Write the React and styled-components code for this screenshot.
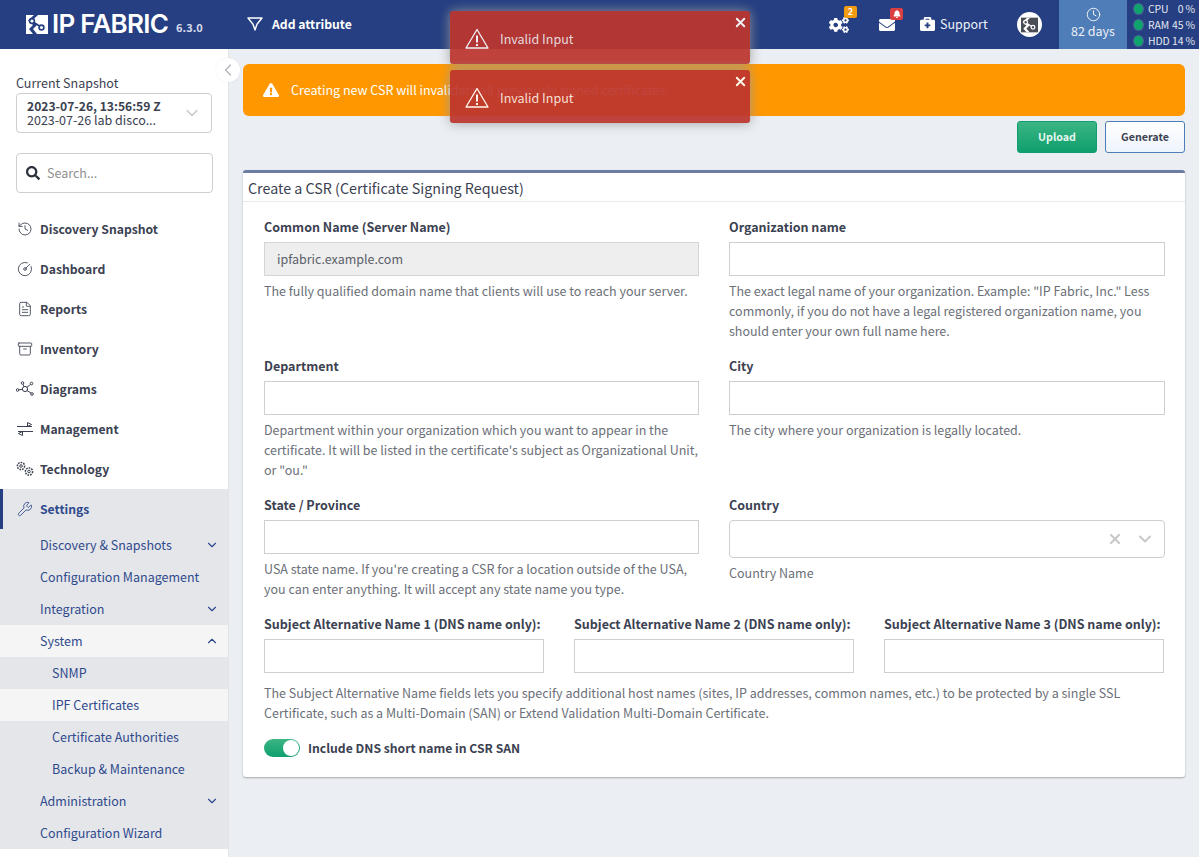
import styled, { createGlobalStyle } from "styled-components";
import {
  Archive,
  ChevronDown,
  ChevronLeft,
  ChevronUp,
  CircleGauge,
  Clock,
  FileText,
  History,
  Wrench,
  X,
} from "lucide-react";
import {
  FaBell,
  FaBriefcaseMedical,
  FaCogs,
  FaEnvelope,
  FaExclamationTriangle,
  FaSearch,
} from "react-icons/fa";

const GlobalStyle = createGlobalStyle`
  html, body {
    margin: 0;
    height: 100%;
    overflow: hidden;
  }
  body {
    font-family: "Noto Sans CJK SC", "Noto Sans", sans-serif;
    font-size: 12.5px;
    line-height: 20px;
    color: #3b4151;
    background: #ebeef3;
  }
  * { box-sizing: border-box; }
`;

const LogoMark = ({ width = 22, height = 19, bg = "#fff", fg = "#253f82" }) => (
  <svg width={width} height={height} viewBox="0 0 22 19">
    <rect width="22" height="19" fill={bg} />
    <path d="M8 0h4L6 5.5 11 10l-4 4 4 5H7l-4-5 4-4-5-4.5z" fill={fg} />
    <circle cx="6" cy="6" r="2.4" fill={bg} stroke={fg} strokeWidth="1.6" />
    <circle cx="15.5" cy="12.5" r="2.4" fill={bg} stroke={fg} strokeWidth="1.6" />
    <path d="M8 7.5l5.5 3.5" stroke={fg} strokeWidth="1.5" />
  </svg>
);

const FunnelIcon = () => (
  <svg width="16" height="16" viewBox="0 0 16 16" fill="none" stroke="#fff" strokeWidth="1.4" strokeLinejoin="round">
    <path d="M1 2h14L10 8.2 8 14 6 8.2z" />
  </svg>
);

const DiagramIcon = () => (
  <svg width="18" height="16" viewBox="0 0 18 16" fill="none" stroke="#3b4151" strokeWidth="1">
    <circle cx="9" cy="8" r="2.6" />
    <circle cx="6.5" cy="2" r="1.3" />
    <circle cx="15.5" cy="2.5" r="1.3" />
    <circle cx="16" cy="13" r="1.3" />
    <circle cx="1.5" cy="9" r="1.3" />
    <path d="M7 3.2l1 2.5M14.5 3.5l-3.7 2.8M15 12l-4.2-2.6M2.8 8.8l3.6-.5" />
  </svg>
);

const TransferIcon = () => (
  <svg width="16" height="16" viewBox="0 0 16 16" fill="none" stroke="#3b4151" strokeWidth="1">
    <path d="M0 5.5h15M10.5 1.5v4l4-2zM16 10.5H1M5.5 14.5v-4l-4 2z" />
  </svg>
);

const GearsIcon = () => (
  <svg width="18" height="16" viewBox="0 0 18 16" fill="none" stroke="#3b4151">
    <circle cx="5" cy="5" r="3.6" strokeWidth="1.5" strokeDasharray="1.7 1" />
    <circle cx="5" cy="5" r="1.3" strokeWidth="1" />
    <circle cx="13" cy="10.5" r="3.6" strokeWidth="1.5" strokeDasharray="1.7 1" />
    <circle cx="13" cy="10.5" r="1.3" strokeWidth="1" />
  </svg>
);

const AlertTriangle = () => (
  <svg width="24" height="21" viewBox="0 0 24 21" fill="none" stroke="#fff" strokeWidth="1.3" strokeLinejoin="round">
    <path d="M12 1.5L23 20H1z" />
    <path d="M12 7.5v7M12 16v2" strokeWidth="2" />
  </svg>
);

const mainNav = [
  { label: "Discovery Snapshot", icon: <History size={16} strokeWidth={1.3} /> },
  { label: "Dashboard", icon: <CircleGauge size={16} strokeWidth={1.3} /> },
  { label: "Reports", icon: <FileText size={16} strokeWidth={1.3} /> },
  { label: "Inventory", icon: <Archive size={16} strokeWidth={1.3} /> },
  { label: "Diagrams", icon: <DiagramIcon /> },
  { label: "Management", icon: <TransferIcon /> },
  { label: "Technology", icon: <GearsIcon /> },
];

const subNav = [
  { label: "Discovery & Snapshots", arrow: "down" },
  { label: "Configuration Management" },
  { label: "Integration", arrow: "down" },
  { label: "System", arrow: "up", light: true },
  { label: "SNMP", nested: true },
  { label: "IPF Certificates", nested: true, light: true },
  { label: "Certificate Authorities", nested: true },
  { label: "Backup & Maintenance", nested: true },
  { label: "Administration", arrow: "down" },
  { label: "Configuration Wizard" },
];

const stats = [
  { name: "CPU", value: "0" },
  { name: "RAM", value: "45" },
  { name: "HDD", value: "14" },
];

export default function App() {
  return (
    <Page>
      <GlobalStyle />
      <Header>
        <Logo>
          <LogoMark />
          <LogoText>IP FABRIC</LogoText>
          <Version>6.3.0</Version>
        </Logo>
        <AddAttribute>
          <FunnelIcon />
          Add attribute
        </AddAttribute>
        <HeaderRight>
          <HeaderIcon $width={20}>
            <FaCogs size={20} color="#fff" />
            <Badge $bg="#f39c12">2</Badge>
          </HeaderIcon>
          <HeaderIcon $width={16}>
            <FaEnvelope size={16} color="#fff" />
            <Badge $bg="#dc3f3f">
              <FaBell size={8} color="#fff" />
            </Badge>
          </HeaderIcon>
          <Support>
            <FaBriefcaseMedical size={15} color="#fff" />
            Support
          </Support>
          <Avatar>
            <LogoMark width={17} height={18} bg="#4a4f57" fg="#fff" />
          </Avatar>
          <Days>
            <Clock size={15} strokeWidth={1.6} />
            82 days
          </Days>
          <Stats>
            {stats.map((s) => (
              <StatRow key={s.name}>
                <Dot />
                <StatName>{s.name}</StatName>
                <StatValue>{s.value}</StatValue>
                <StatUnit>%</StatUnit>
              </StatRow>
            ))}
          </Stats>
        </HeaderRight>
      </Header>

      <Body>
        <Sidebar>
          <CollapseButton>
            <ChevronLeft size={20} strokeWidth={1.5} />
          </CollapseButton>
          <SnapshotLabel>Current Snapshot</SnapshotLabel>
          <SnapshotSelect>
            <div>
              <SnapshotDate>2023-07-26, 13:56:59 Z</SnapshotDate>
              <div>2023-07-26 lab disco...</div>
            </div>
            <ChevronDown size={20} strokeWidth={1.6} color="#c4c4c4" />
          </SnapshotSelect>
          <SearchBox>
            <FaSearch size={14} color="#2b303a" />
            Search...
          </SearchBox>
          <Nav>
            {mainNav.map((item) => (
              <NavItem key={item.label}>
                <NavIcon>{item.icon}</NavIcon>
                {item.label}
              </NavItem>
            ))}
            <NavItem $active>
              <NavIcon>
                <Wrench size={16} strokeWidth={1.3} />
              </NavIcon>
              Settings
            </NavItem>
            {subNav.map((item) => (
              <SubItem key={item.label} $nested={item.nested} $light={item.light}>
                {item.label}
                {item.arrow === "down" && <ChevronDown size={14} strokeWidth={2} />}
                {item.arrow === "up" && <ChevronUp size={14} strokeWidth={2} />}
              </SubItem>
            ))}
          </Nav>
        </Sidebar>

        <Main>
          <Warning>
            <FaExclamationTriangle size={16} color="#fff" />
            Creating new CSR will invalidate all previously signed certificates.
          </Warning>
          <Actions>
            <UploadButton>Upload</UploadButton>
            <GenerateButton>Generate</GenerateButton>
          </Actions>
          <Card>
            <CardTitle>Create a CSR (Certificate Signing Request)</CardTitle>
            <Form>
              <TwoColumns>
                <Field>
                  <Label>Common Name (Server Name)</Label>
                  <Input $disabled>ipfabric.example.com</Input>
                  <Help>The fully qualified domain name that clients will use to reach your server.</Help>
                </Field>
                <Field>
                  <Label>Organization name</Label>
                  <Input />
                  <Help>
                    The exact legal name of your organization. Example: "IP Fabric, Inc." Less commonly, if you do
                    not have a legal registered organization name, you should enter your own full name here.
                  </Help>
                </Field>
                <Field>
                  <Label>Department</Label>
                  <Input />
                  <Help>
                    Department within your organization which you want to appear in the certificate. It will be
                    listed in the certificate's subject as Organizational Unit, or "ou."
                  </Help>
                </Field>
                <Field>
                  <Label>City</Label>
                  <Input />
                  <Help>The city where your organization is legally located.</Help>
                </Field>
                <Field>
                  <Label>State / Province</Label>
                  <Input />
                  <Help>
                    USA state name. If you're creating a CSR for a location outside of the USA, you can enter
                    anything. It will accept any state name you type.
                  </Help>
                </Field>
                <Field>
                  <Label>Country</Label>
                  <CountrySelect>
                    <X size={16} strokeWidth={3.2} color="#c8c8c8" />
                    <ChevronDown size={20} strokeWidth={2.4} color="#c8c8c8" />
                  </CountrySelect>
                  <Help>Country Name</Help>
                </Field>
              </TwoColumns>
              <ThreeColumns>
                {[1, 2, 3].map((n) => (
                  <Field key={n}>
                    <Label>Subject Alternative Name {n} (DNS name only):</Label>
                    <Input />
                  </Field>
                ))}
              </ThreeColumns>
              <SanHelp>
                The Subject Alternative Name fields lets you specify additional host names (sites, IP addresses,
                common names, etc.) to be protected by a single SSL Certificate, such as a Multi-Domain (SAN) or
                Extend Validation Multi-Domain Certificate.
              </SanHelp>
              <ToggleRow>
                <Toggle />
                Include DNS short name in CSR SAN
              </ToggleRow>
            </Form>
          </Card>
        </Main>
      </Body>

      <Toast $top={11}>
        <CloseToast>
          <X size={15} strokeWidth={3} />
        </CloseToast>
        <AlertTriangle />
        Invalid Input
      </Toast>
      <Toast $top={70}>
        <CloseToast>
          <X size={15} strokeWidth={3} />
        </CloseToast>
        <AlertTriangle />
        Invalid Input
      </Toast>
    </Page>
  );
}

const Page = styled.div`
  position: relative;
  height: 857px;
  overflow: hidden;
`;

const Header = styled.header`
  display: flex;
  align-items: center;
  height: 49px;
  padding-left: 26px;
  background: #253f82;
  color: #fff;
`;

const Logo = styled.div`
  display: flex;
  align-items: center;
  width: 221px;
  padding-bottom: 1px;
`;

const LogoText = styled.span`
  margin-left: 4px;
  font-family: Inter, sans-serif;
  font-size: 26px;
  font-weight: 600;
  letter-spacing: -0.75px;
  white-space: nowrap;
`;

const Version = styled.span`
  margin: 6px 0 0 8px;
  font-size: 11px;
  font-weight: 700;
  color: #d5dbe8;
`;

const AddAttribute = styled.div`
  display: flex;
  align-items: center;
  gap: 9px;
  padding-bottom: 2px;
  font-size: 12.2px;
  font-weight: 700;
`;

const HeaderRight = styled.div`
  display: flex;
  align-items: center;
  height: 100%;
  margin-left: auto;
`;

const HeaderIcon = styled.div`
  position: relative;
  display: flex;
  width: ${(p) => p.$width}px;
  margin-right: 30px;
`;

const Badge = styled.span`
  position: absolute;
  top: -9px;
  right: -8px;
  display: flex;
  align-items: center;
  justify-content: center;
  width: 13px;
  height: 12px;
  border-radius: 2px;
  background: ${(p) => p.$bg};
  font-size: 9px;
  line-height: 12px;
  font-weight: 700;
`;

const Support = styled.div`
  display: flex;
  align-items: center;
  gap: 5px;
  width: 97px;
  margin-left: -5px;
  padding-bottom: 2px;
  color: #eef1f7;
`;

const Avatar = styled.div`
  display: flex;
  align-items: center;
  justify-content: center;
  width: 25px;
  height: 25px;
  margin-right: 17px;
  border-radius: 50%;
  background: #fff;
`;

const Days = styled.div`
  display: flex;
  flex-direction: column;
  align-items: center;
  justify-content: center;
  width: 68px;
  height: 100%;
  padding-bottom: 3px;
  background: #4f7db8;
  color: #eef1f7;
  line-height: 18px;
`;

const Stats = styled.div`
  display: flex;
  flex-direction: column;
  justify-content: space-between;
  width: 72px;
  height: 100%;
  padding: 1px 4px 0 7px;
`;

const StatRow = styled.div`
  display: flex;
  align-items: center;
  height: 16px;
  font-size: 10.4px;
  line-height: 16px;
  color: #e4e8f1;
`;

const Dot = styled.span`
  width: 10px;
  height: 10px;
  margin-right: 5px;
  border-radius: 50%;
  background: #0ea56c;
  box-shadow: 0 0 0 1px rgba(150, 170, 190, 0.35);
`;

const StatName = styled.span`
  width: 25px;
`;

const StatValue = styled.span`
  width: 15px;
  text-align: right;
`;

const StatUnit = styled.span`
  margin-left: 2px;
`;

const Body = styled.div`
  display: flex;
  height: 808px;
`;

const Sidebar = styled.aside`
  position: relative;
  z-index: 1;
  flex: none;
  width: 228px;
  padding-top: 24px;
  background: #fff;
`;

const CollapseButton = styled.div`
  position: absolute;
  top: 9px;
  right: -12px;
  display: flex;
  align-items: center;
  justify-content: center;
  width: 24px;
  height: 24px;
  border-radius: 50%;
  background: #fff;
  box-shadow: 0 0 2px rgba(0, 0, 0, 0.08);
  color: #b0b4bb;
`;

const SnapshotLabel = styled.div`
  margin: 0 0 1px 16px;
  line-height: 19px;
`;

const SnapshotSelect = styled.div`
  display: flex;
  align-items: center;
  justify-content: space-between;
  width: 196px;
  height: 40px;
  margin-left: 16px;
  padding: 0 9px 0 10px;
  border: 1px solid #cfcfcf;
  border-radius: 4px;
  line-height: 14px;
`;

const SnapshotDate = styled.div`
  font-size: 12.1px;
  font-weight: 700;
`;

const SearchBox = styled.div`
  display: flex;
  align-items: center;
  gap: 7px;
  width: 197px;
  height: 40px;
  margin: 20px 0 16px 16px;
  padding-left: 9px;
  border: 1px solid #cfcfcf;
  border-radius: 4px;
  color: #8e8e8e;
`;

const Nav = styled.nav`
  display: flex;
  flex-direction: column;
`;

const NavItem = styled.div`
  display: flex;
  align-items: center;
  flex: none;
  height: 40px;
  padding-left: ${(p) => (p.$active ? 13 : 16)}px;
  border-left: ${(p) => (p.$active ? "3px solid #253f82" : "none")};
  background: ${(p) => (p.$active ? "#e5e6ea" : "transparent")};
  color: ${(p) => (p.$active ? "#2f4a8c" : "#3b4151")};
  font-size: 12.2px;
  font-weight: 700;
`;

const NavIcon = styled.span`
  display: flex;
  align-items: center;
  justify-content: center;
  width: 18px;
  margin-right: 6px;
`;

const SubItem = styled.div`
  display: flex;
  align-items: center;
  justify-content: space-between;
  flex: none;
  height: 32px;
  padding: 0 9px 0 ${(p) => (p.$nested ? 52 : 40)}px;
  background: ${(p) => (p.$light ? "#f5f5f5" : "#e5e6ea")};
  color: #2f4a8c;
`;

const Main = styled.main`
  flex: 1;
  padding: 15px 14px 0 14px;
  border-left: 1px solid #e2e4ea;
`;

const Warning = styled.div`
  display: flex;
  align-items: center;
  gap: 12px;
  height: 52px;
  padding-left: 20px;
  border-radius: 6px;
  background: #ff9800;
  color: #fff;
`;

const Actions = styled.div`
  display: flex;
  justify-content: flex-end;
  gap: 8px;
  margin: 5px 0 17px;
`;

const UploadButton = styled.div`
  display: flex;
  align-items: center;
  justify-content: center;
  width: 80px;
  height: 32px;
  border: 1px solid #109e6e;
  border-radius: 3px;
  background: linear-gradient(#3bb583, #0f9f6e);
  color: #e8f7f1;
  font-size: 10.7px;
  font-weight: 700;
`;

const GenerateButton = styled.div`
  display: flex;
  align-items: center;
  justify-content: center;
  width: 80px;
  height: 32px;
  border: 1px solid #4f7db8;
  border-radius: 3px;
  background: linear-gradient(#fff, #eef4fc);
  color: #3b4151;
  font-size: 10.7px;
  font-weight: 700;
`;

const Card = styled.section`
  height: 607px;
  border-top: 3px solid #6b7da3;
  border-radius: 3px;
  background: #fff;
  box-shadow: 0 1px 2px rgba(0, 0, 0, 0.3);
`;

const CardTitle = styled.h2`
  height: 29px;
  margin: 0;
  padding: 4px 5px 0;
  border-bottom: 1px solid #e8eaee;
  font-size: 14.3px;
  font-weight: 400;
  line-height: 22px;
`;

const Form = styled.div`
  padding: 15px 20px 0 21px;
`;

const TwoColumns = styled.div`
  display: grid;
  grid-template-columns: 435px 436px;
  column-gap: 30px;
  row-gap: 15px;
`;

const ThreeColumns = styled.div`
  display: grid;
  grid-template-columns: repeat(3, 280px);
  column-gap: 30px;
  margin-top: 15px;
`;

const Field = styled.div`
  display: flex;
  flex-direction: column;
`;

const Label = styled.label`
  margin-bottom: 5px;
  font-weight: 700;
  white-space: nowrap;
`;

const Input = styled.div`
  height: 34px;
  padding: 6px 12px;
  border: 1px solid ${(p) => (p.$disabled ? "#d5d5d5" : "#cfcfcf")};
  background: ${(p) => (p.$disabled ? "#eeeeee" : "#fff")};
  color: #5b606b;
`;

const CountrySelect = styled.div`
  display: flex;
  align-items: center;
  justify-content: flex-end;
  gap: 12px;
  height: 38px;
  padding-right: 9px;
  border: 1px solid #cfcfcf;
  border-radius: 4px;
`;

const Help = styled.div`
  margin-top: 5px;
  color: #6b6f78;
`;

const SanHelp = styled(Help)`
  margin-top: 10px;
`;

const ToggleRow = styled.div`
  display: flex;
  align-items: center;
  gap: 8px;
  margin-top: 15px;
  font-size: 12.2px;
  font-weight: 700;
`;

const Toggle = styled.span`
  position: relative;
  width: 36px;
  height: 18px;
  border-radius: 9px;
  background: linear-gradient(#3bb583, #0f9f6e);

  &::after {
    content: "";
    position: absolute;
    top: 1px;
    right: 1px;
    width: 16px;
    height: 16px;
    border-radius: 50%;
    background: #fff;
  }
`;

const Toast = styled.div`
  position: absolute;
  z-index: 2;
  top: ${(p) => p.$top}px;
  left: 450px;
  display: flex;
  align-items: center;
  gap: 11px;
  width: 300px;
  height: 53px;
  padding: 2px 0 0 15px;
  border-radius: 3px;
  background: #bd362f;
  box-shadow: 0 0 12px #999;
  opacity: 0.93;
  color: rgba(255, 255, 255, 0.88);
`;

const CloseToast = styled.span`
  position: absolute;
  top: 4px;
  right: 2px;
  display: flex;
  color: #fff;
`;
